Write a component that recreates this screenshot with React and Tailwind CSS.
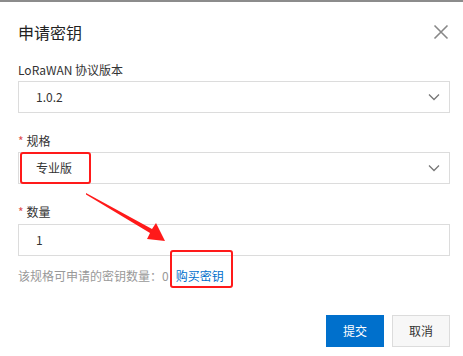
export default function App() {
  const Chevron = () => (
    <svg width="12" height="8" viewBox="0 0 12 8" className="text-[#777]">
      <path d="M1 1.5 L6 6.5 L11 1.5" fill="none" stroke="currentColor" strokeWidth="1.3" />
    </svg>
  );

  return (
    <div
      className="relative h-[356px] w-[463px] overflow-hidden bg-white text-[#333]"
      style={{ fontFamily: '"Noto Sans CJK SC", "Noto Sans", sans-serif' }}
    >
      <div className="h-[2px] bg-[#8c8c8c]" />
      <div className="pl-[18px] pr-[13px]">
        <div className="flex h-[58px] items-center justify-between pt-[2px]">
          <h2 className="text-[16px] leading-none text-[#222]">申请密钥</h2>
          <svg width="16" height="16" viewBox="0 0 16 16" className="mr-[1px] text-[#888]">
            <path d="M1.5 1.5 L14.5 14.5 M14.5 1.5 L1.5 14.5" stroke="currentColor" strokeWidth="1.6" />
          </svg>
        </div>

        <div className="text-[12px] leading-[20px]">LoRaWAN 协议版本</div>
        <div className="mt-[1px] flex h-[32px] items-center justify-between border border-[#dcdcdc] pl-[17px] pr-[9px] text-[12px]">
          <span>1.0.2</span>
          <Chevron />
        </div>

        <div className="mt-[18px] flex items-center text-[12px] leading-[20px]">
          <span className="mr-[3px] text-[#e05050]">*</span>
          <span>规格</span>
        </div>
        <div className="mt-[1px] flex h-[32px] items-center justify-between border border-[#dcdcdc] pl-[17px] pr-[9px] text-[12px]">
          <span>专业版</span>
          <Chevron />
        </div>

        <div className="mt-[18px] flex items-center text-[12px] leading-[20px]">
          <span className="mr-[3px] text-[#e05050]">*</span>
          <span>数量</span>
        </div>
        <div className="mt-[2px] flex h-[32px] items-center border border-[#dcdcdc] pl-[17px] text-[12px]">
          <span>1</span>
        </div>

        <div className="mt-[10px] flex items-center text-[12px] leading-[20px]">
          <span className="text-[#999]">该规格可申请的密钥数量：0</span>
          <span className="ml-[7px] text-[#0070cc]">购买密钥</span>
        </div>

        <div className="mt-[29px] flex justify-end gap-[8px]">
          <button className="h-[32px] w-[58px] bg-[#0070cc] text-[12px] text-white">提交</button>
          <button className="h-[32px] w-[58px] border border-[#dcdcdc] bg-[#f7f7f7] text-[12px] text-[#333]">
            取消
          </button>
        </div>
      </div>

      <div className="absolute left-[20px] top-[152px] h-[32px] w-[71px] rounded-[3px] border-[2px] border-[#ff1a1a]" />
      <div className="absolute left-[170px] top-[250px] h-[38px] w-[63px] rounded-[3px] border-[2px] border-[#ff1a1a]" />
      <svg className="absolute left-0 top-0" width="463" height="356" viewBox="0 0 463 356">
        <polygon points="86,193 152,229 156,223 165,241 147,239 150,233 86,194.5" fill="#ff1a1a" />
      </svg>
    </div>
  );
}
